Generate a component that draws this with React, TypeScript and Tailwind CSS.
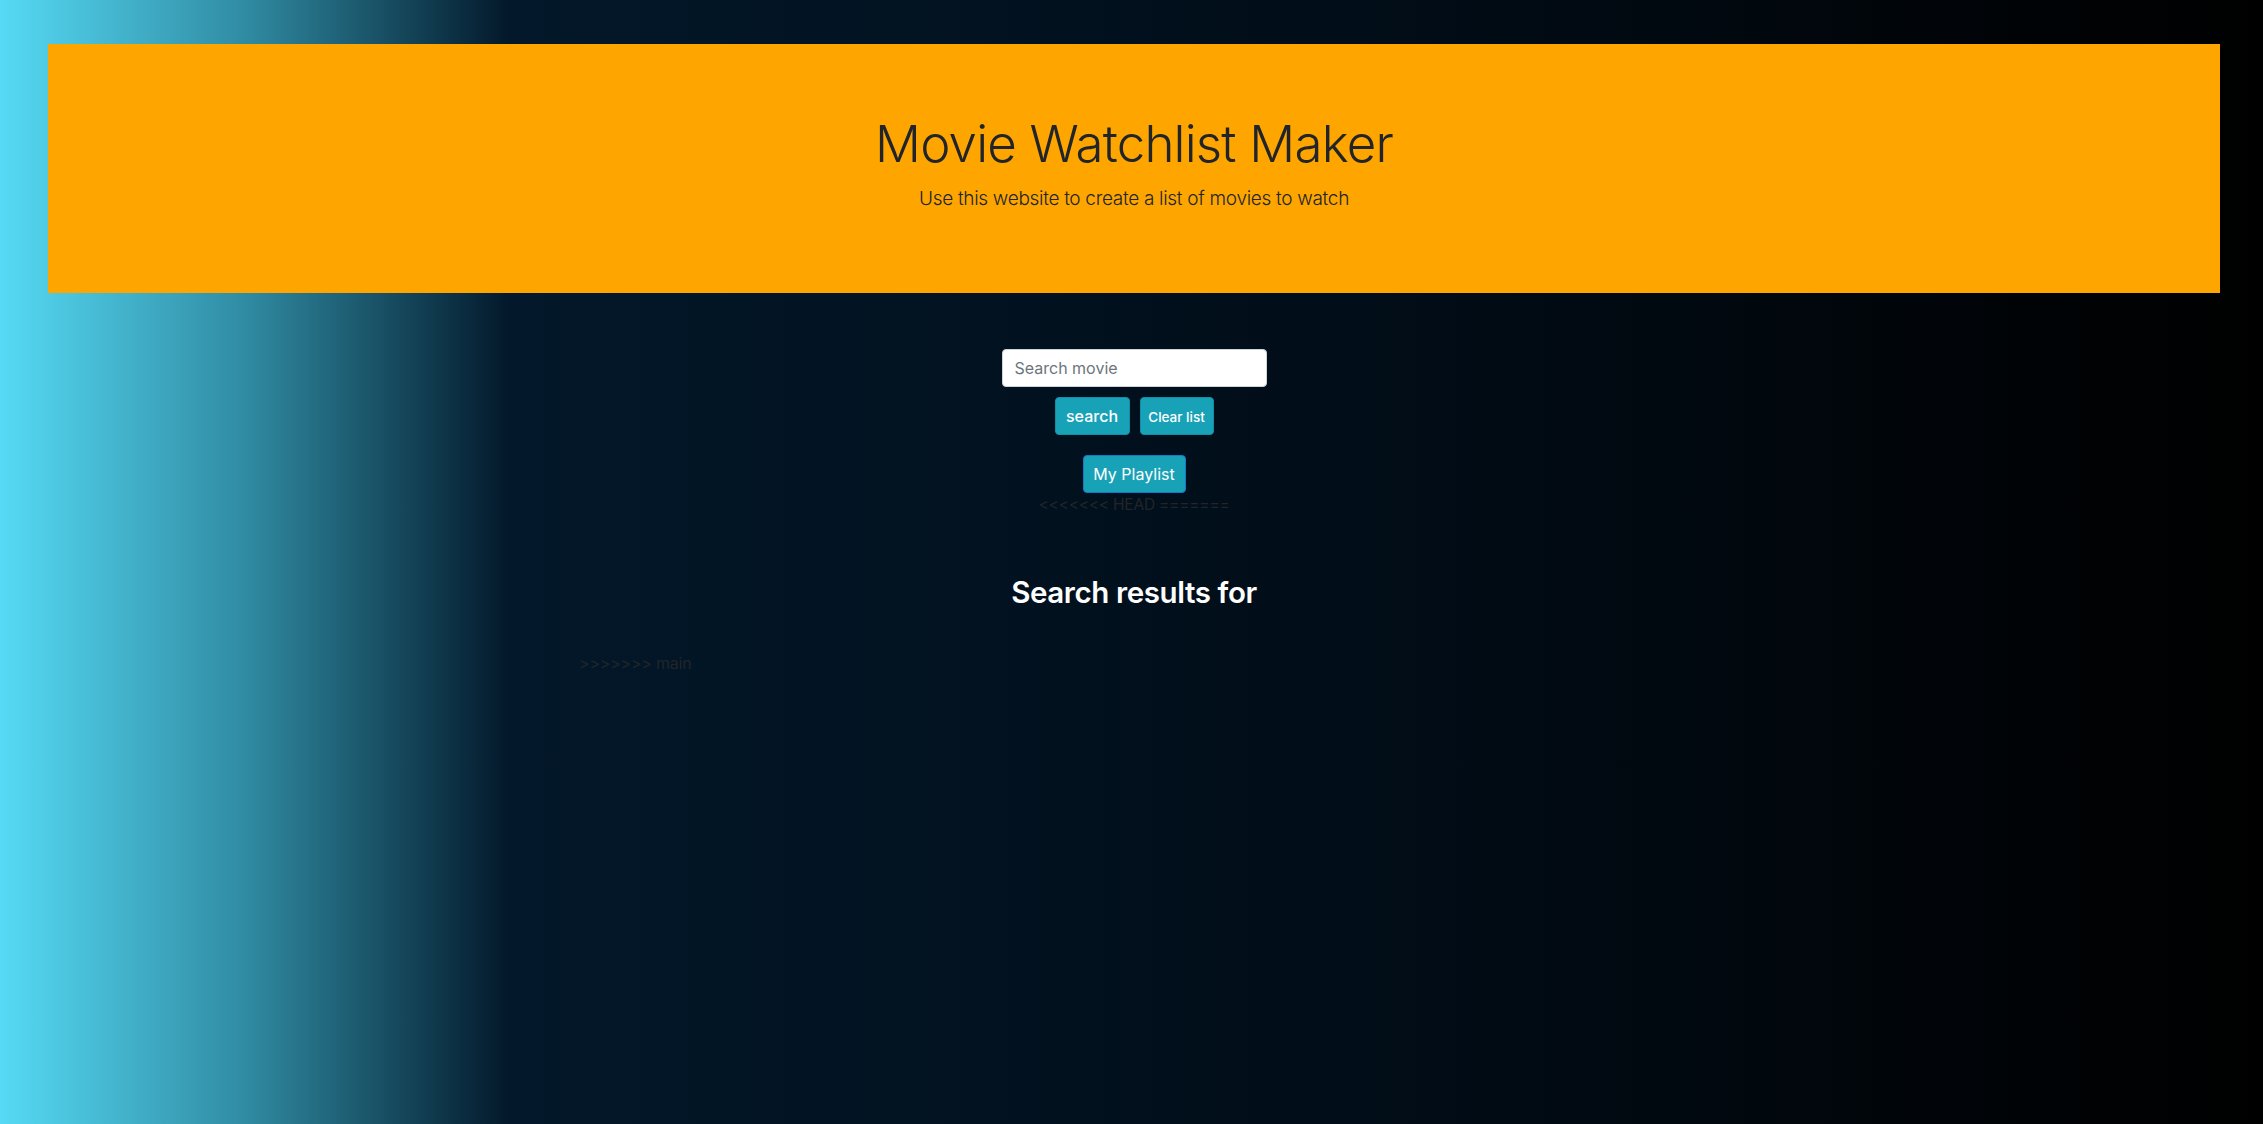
export default function App() {
  return (
    <div
      className="min-h-[1124px] w-full bg-[linear-gradient(to_right,#56daf5_0%,#2f8aa1_11%,#03182a_22.5%,#010d18_60%,#000000_100%)] pt-[44px] font-['Inter','Liberation_Sans',sans-serif] text-[#212529]"
    >
      {/* Jumbotron */}
      <header className="ml-[48px] mr-[43px] flex h-[249px] flex-col items-center justify-center bg-[#ffa500] pb-[10px]">
        <h1 className="text-[51px] font-light leading-[1.2] tracking-[-0.8px]">
          Movie Watchlist Maker
        </h1>
        <p className="mt-[11px] text-[19px] font-light leading-[1.5] tracking-[-0.3px]">
          Use this website to create a list of movies to watch
        </p>
      </header>

      <div className="ml-[48px] mr-[43px] flex flex-col items-center pt-[56px]">
        <input
          type="text"
          placeholder="Search movie"
          className="h-[38px] w-[265px] rounded-[4px] border border-[#ced4da] bg-white px-[12px] text-[16px] text-[#495057] placeholder:text-[#6c757d] outline-none"
        />
        <div className="mt-[10px] flex gap-[10px]">
          <button className="h-[38px] w-[75px] rounded-[4px] border border-[#138ea9] bg-[#17a2b8] text-[16px] font-medium text-white">
            search
          </button>
          <button className="h-[38px] w-[74px] rounded-[4px] border border-[#138ea9] bg-[#17a2b8] pt-[3px] text-[13.5px] font-medium text-white">
            Clear list
          </button>
        </div>
        <button className="mt-[20px] h-[38px] w-[103px] rounded-[4px] border border-[#1379c9] bg-[#17a2b8] text-[16px] text-white">
          My Playlist
        </button>
        <p className="text-[15.5px] leading-[24px] tracking-[-0.2px] text-[#212529]">&lt;&lt;&lt;&lt;&lt;&lt;&lt; HEAD =======</p>

        <h2 className="mt-[58px] text-[29.5px] font-semibold leading-[1.2] tracking-[-0.4px] text-white">
          Search results for
        </h2>

        <div className="mt-[41px] w-[1140px] px-[15px]">
          <p className="text-[16px] leading-[24px] tracking-[-0.2px] text-[#212529]">&gt;&gt;&gt;&gt;&gt;&gt;&gt; main</p>
        </div>
      </div>
    </div>
  )
}
